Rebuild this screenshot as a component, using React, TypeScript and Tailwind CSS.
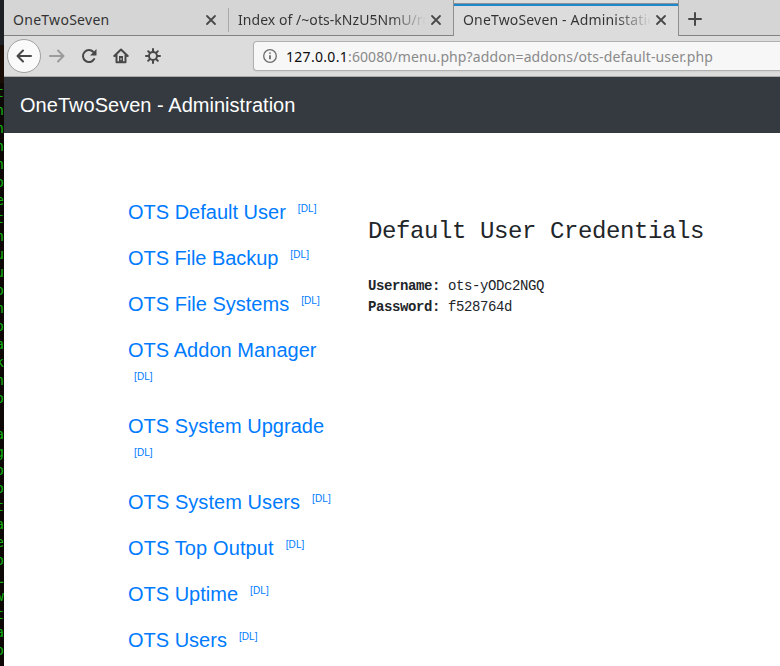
import type { ReactNode } from "react";

const terminalLines = [
  "t", "n", "n", "n", "n", "o", "e", "t", "n", "u", "u", "o", "n", "o", "a", "k",
  "n", "o", "", "a", "g", "o", "o", "t", "a", "e", "o", "L", "w", "t", "a", "o",
];

const addons = [
  { name: "OTS Default User", fit: "tracking-normal" },
  { name: "OTS File Backup", fit: "tracking-[-0.06px]" },
  { name: "OTS File Systems", fit: "tracking-normal" },
  { name: "OTS Addon Manager", fit: "tracking-[0.04px]", wraps: true },
  { name: "OTS System Upgrade", fit: "tracking-[0.03px]", wraps: true },
  { name: "OTS System Users", fit: "tracking-[0.06px]" },
  { name: "OTS Top Output", fit: "tracking-[0.11px]" },
  { name: "OTS Uptime", fit: "tracking-normal" },
  { name: "OTS Users", fit: "tracking-normal" },
];

function CloseIcon() {
  return (
    <svg width="12" height="12" viewBox="0 0 12 12" className="shrink-0" fill="none" stroke="#484848" strokeWidth="1.8" strokeLinecap="round">
      <path d="M2 2l8 8M10 2l-8 8" />
    </svg>
  );
}

function ToolIcon({ children, color = "#484848" }: { children: ReactNode; color?: string }) {
  return (
    <svg width="16" height="16" viewBox="0 0 16 16" className="shrink-0" fill="none" stroke={color} strokeWidth="2" strokeLinecap="round" strokeLinejoin="round">
      {children}
    </svg>
  );
}

function Terminal() {
  return (
    <div className="flex h-full w-1 shrink-0 flex-col items-end overflow-hidden bg-[#0d0805] font-['DejaVu_Sans_Mono',monospace] text-[14px] leading-[18px] text-[#10b010]">
      <div className="h-[45px] w-full shrink-0 bg-[#1d2024]" />
      <div className="h-[38px] w-full shrink-0 bg-[#1a0d05]" />
      {terminalLines.map((line, i) => (
        <div key={i} className="h-[18px] shrink-0">{line}</div>
      ))}
    </div>
  );
}

function TabBar() {
  return (
    <div className="flex h-9 shrink-0 font-['Noto_Sans',sans-serif] text-[14px] leading-5 text-[#333]">
      <div className="flex w-[224px] shrink-0 items-center border-b border-[#828282] pt-1 pr-[11px] pl-[9px]">
        <span className="grow whitespace-nowrap tracking-[0.28px]">OneTwoSeven</span>
        <CloseIcon />
      </div>
      <div className="flex w-[225px] shrink-0 items-center border-b border-[#828282] pt-1 pr-[11px]">
        <div className="mr-[9px] h-6 w-px shrink-0 bg-[#aaa]" />
        <span className="w-[190px] shrink-0 overflow-hidden bg-linear-to-r from-[#333] from-80% to-transparent to-99% bg-clip-text tracking-[0.05px] whitespace-nowrap text-transparent">Index of /~ots-kNzU5NmU/root</span>
        <span className="ml-[2px] flex"><CloseIcon /></span>
      </div>
      <div className="flex w-[226px] shrink-0 flex-col border-x border-[#8e8e8e] bg-[#dcdcdc] pt-[3px]">
        <div className="h-[3px] shrink-0 border-t border-[#8a9297] bg-[#1c87c9]" />
        <div className="flex grow items-center pr-[11px] pb-[2px] pl-[9px]">
          <span className="w-[190px] shrink-0 overflow-hidden bg-linear-to-r from-[#333] from-80% to-transparent to-99% bg-clip-text tracking-[0.17px] whitespace-nowrap text-transparent">OneTwoSeven - Administation</span>
          <span className="ml-[2px] flex"><CloseIcon /></span>
        </div>
      </div>
      <div className="flex grow items-center border-b border-[#828282] pt-[3px] pl-[9px]">
        <svg width="14" height="14" viewBox="0 0 14 14" fill="none" stroke="#484848" strokeWidth="2" strokeLinecap="round">
          <path d="M7 1v12M1 7h12" />
        </svg>
      </div>
    </div>
  );
}

function Toolbar() {
  return (
    <div className="flex h-[41px] shrink-0 items-center border-b border-[#aaa] bg-[#dcdcdc] pl-[3px]">
      <div className="flex size-[34px] shrink-0 items-center justify-center rounded-full border border-[#a0a0a0] bg-[#fafafa]">
        <ToolIcon><path d="M15 8H1.5M7 2.5L1.5 8L7 13.5" /></ToolIcon>
      </div>
      <div className="ml-2 flex gap-4">
        <ToolIcon color="#9b9b9b"><path d="M1 8h13.5M9 2.5L14.5 8L9 13.5" /></ToolIcon>
        <ToolIcon>
          <path d="M13.2 11A6 6 0 1 1 12.4 4" />
          <path d="M15.5 1v6.4H9.1z" fill="#484848" stroke="none" />
        </ToolIcon>
        <ToolIcon>
          <path d="M1.3 8L8 1.5L14.7 8M3.5 7v7.2h9V7" />
          <path d="M6 8h4v6H6z" fill="#484848" stroke="none" />
          <path d="M8 10.5v1.2" stroke="#dcdcdc" strokeWidth="1" />
        </ToolIcon>
        <ToolIcon>
          <circle cx="8" cy="8" r="4" />
          <path d="M8 1v2M8 13v2M1 8h2M13 8h2M3.2 3.2l1.2 1.2M11.6 11.6l1.2 1.2M3.2 12.8l1.2-1.2M11.6 4.4l1.2-1.2" />
        </ToolIcon>
      </div>
      <div className="ml-[92px] flex h-[30px] grow items-center rounded-l-[4px] border border-r-0 border-[#b0b0b0] bg-[#f7f7f7] pl-[9px] font-['Noto_Sans',sans-serif] text-[14px] tracking-[0.11px] shadow-[0_1px_2px_#0001]">
        <svg width="14" height="14" viewBox="0 0 14 14" className="mr-[9px] shrink-0" fill="none" stroke="#6c6c6c">
          <circle cx="7" cy="7" r="6.3" strokeWidth="1.3" />
          <path d="M7 6.3v4M7 3.4v1.4" strokeWidth="1.8" />
        </svg>
        <span className="whitespace-nowrap text-[#8a8a8a]">
          <span className="tracking-[0.3px] text-[#0c0c0c]">127.0.0.1</span>:60080/menu.php?addon=addons/ots-default-user.php
        </span>
      </div>
    </div>
  );
}

export default function App() {
  return (
    <div className="flex h-[666px] w-[780px] overflow-hidden bg-white">
      <Terminal />
      <div className="flex w-[776px] shrink-0 flex-col bg-[#d5d5d5] font-['Liberation_Sans',Arial,sans-serif]">
        <TabBar />
        <Toolbar />
        <header className="flex h-14 shrink-0 items-center bg-[#343a40] px-4 text-xl leading-[30px] tracking-[0.03px] text-white">
          OneTwoSeven - Administration
        </header>
        <main className="flex grow bg-white">
          <nav className="ml-[124px] flex w-60 shrink-0 flex-col gap-4 pt-16 text-xl leading-[30px] text-[#007bff]">
            {addons.map((addon) => (
              <div key={addon.name} className={addon.wraps ? "flex h-[60px] shrink-0 flex-col" : "flex h-[30px] shrink-0"}>
                <a className={`whitespace-nowrap ${addon.fit}`}>{addon.name}</a>
                <a className={addon.wraps ? "ml-[6px] -mt-[3px] text-[10px] leading-[30px] tracking-[0.1px]" : "ml-3 text-[10px] leading-[23px] tracking-[0.1px]"}>[DL]</a>
              </div>
            ))}
          </nav>
          <section className="font-['Liberation_Mono',monospace] text-[#212529]">
            <h4 className="mt-[84px] text-2xl leading-[29px] tracking-[-0.4px]">Default User Credentials</h4>
            <div className="mt-[30px] text-[14px] leading-[21px] tracking-[-0.4px]">
              <p><b>Username:</b> ots-yODc2NGQ</p>
              <p><b>Password:</b> f528764d</p>
            </div>
          </section>
        </main>
      </div>
    </div>
  );
}
